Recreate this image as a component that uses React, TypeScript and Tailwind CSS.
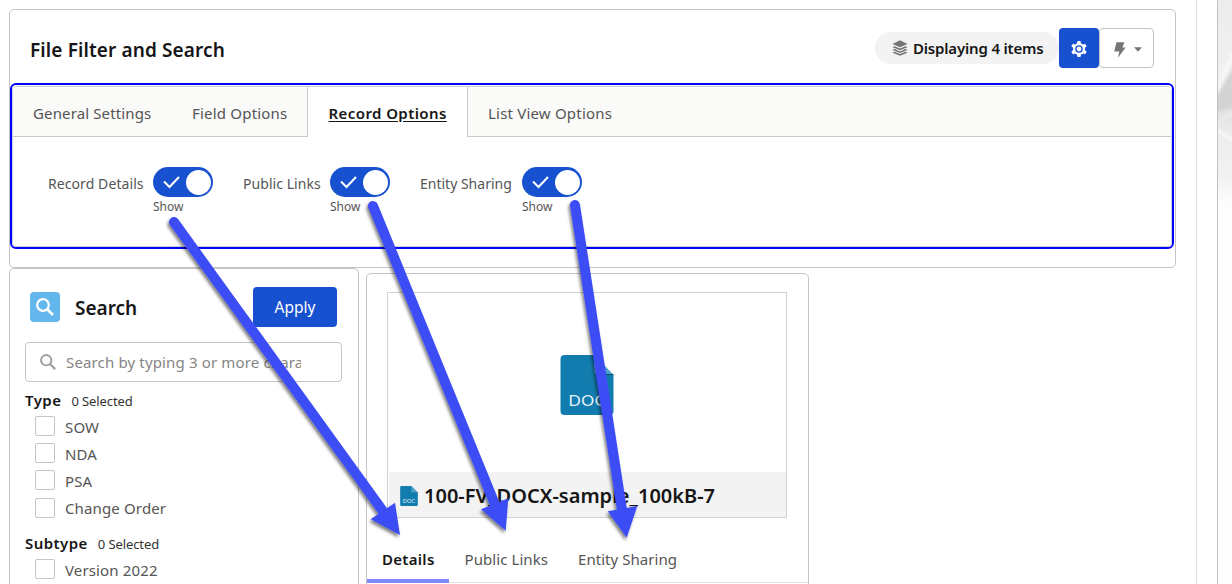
import type { ReactNode } from "react";

function SearchIcon({ className }: { className: string }) {
  return (
    <svg viewBox="0 0 18 18" className={className} fill="none" stroke="currentColor">
      <circle cx="7" cy="7" r="5.8" strokeWidth="2.2" />
      <path d="M11 11L17 17" strokeWidth="2.6" />
    </svg>
  );
}

function DocIcon({ className }: { className: string }) {
  return (
    <svg viewBox="0 0 54 60" className={className}>
      <path d="M4.5 0H34L53.5 20V56a4 4 0 0 1-4 4H4.5a4 4 0 0 1-4-4V4a4 4 0 0 1 4-4z" fill="#127cae" />
      <path d="M34 0V16a4 4 0 0 0 4 4H53.5z" fill="#4ba3cd" />
      <path d="M36 19.5H53.5" stroke="#0a4f70" strokeWidth="1" />
      <text x="8.5" y="50.5" fontFamily="Lato, sans-serif" fontSize="16" letterSpacing="0.6" fill="#e6f3f9">
        DOC
      </text>
    </svg>
  );
}

function Toggle({ label, labelClass }: { label: string; labelClass: string }) {
  return (
    <div className="flex">
      <span className={`${labelClass} mt-1.5 h-[22px] whitespace-nowrap text-[14px] leading-[22px] text-[#555]`}>{label}</span>
      <div>
        <div className="flex h-[30px] w-[60px] items-center justify-between rounded-full bg-[#1751d0] pr-0.5 pl-2.5">
          <svg viewBox="0 0 18 14" className="h-[14px] w-[18px]" fill="none" stroke="white" strokeWidth="2">
            <path d="M1 6.5L6.5 12L16 2" />
          </svg>
          <span className="h-[25px] w-[25px] rounded-full bg-white" />
        </div>
        <div className="pt-px text-[12px] leading-[18px] text-[#555]">Show</div>
      </div>
    </div>
  );
}

function Check({ children, low, last }: { children: ReactNode; low?: boolean; last?: boolean }) {
  return (
    <label className={`flex pl-[10px] ${last ? "h-[20px]" : "h-[27px]"}`}>
      <span className={`h-5 w-5 rounded-[2px] border border-[#c5c5c5] bg-white ${low ? "mt-px" : ""}`} />
      <span className="ml-[10px] h-[22px] text-[15px] leading-[23px] tracking-[0.14px] text-[#555]">{children}</span>
    </label>
  );
}

function Group({ title, children }: { title: string; children: ReactNode }) {
  return (
    <section>
      <div className="flex h-[26px] items-center gap-[10px] pb-[2px]">
        <span className="text-[15px] leading-[22px] font-semibold tracking-[0.45px] text-[#161616]">{title}</span>
        <span className="pt-px text-[13px] leading-[20px] tracking-[-0.1px] text-[#333]">0 Selected</span>
      </div>
      {children}
    </section>
  );
}

function Arrows() {
  return (
    <svg className="pointer-events-none absolute inset-0 h-[584px] w-[1232px]" viewBox="0 0 1232 584">
      <defs>
        <filter id="shadow" x="-10%" y="-10%" width="120%" height="120%">
          <feDropShadow dx="-1.5" dy="2.5" stdDeviation="1.8" floodColor="#000" floodOpacity="0.5" />
        </filter>
      </defs>
      <g filter="url(#shadow)" fill="#3d4df5" stroke="#3d4df5">
        <path d="M174 222L385 514" strokeWidth="10" strokeLinecap="round" />
        <path d="M400 535L370.7 519.3L395 502.7Z" stroke="none" />
        <path d="M373 206L496 507" strokeWidth="10" strokeLinecap="round" />
        <path d="M505.7 530.7L481 509.3L508.3 498.3Z" stroke="none" />
        <path d="M575 205L622 510" strokeWidth="10" strokeLinecap="round" />
        <path d="M626.7 537.7L607.7 511.3L637.3 506Z" stroke="none" />
      </g>
    </svg>
  );
}

export default function App() {
  return (
    <div className="relative flex h-[584px] w-[1232px] overflow-hidden bg-white font-['Noto_Sans',sans-serif]">
      <main className="h-[584px] w-[1197px] shrink-0 border-r border-[#e0e0e0] pt-[9px] pl-[9px]">
        <section className="h-[259px] w-[1167px] rounded-[5px] border border-[#c5c5c5]">
          <header className="flex h-[73px] items-center pt-[3px] pr-[21px] pl-5">
            <h1 className="pt-[5px] text-[19px] font-semibold tracking-[0.12px] text-[#161616]">File Filter and Search</h1>
            <div className="ml-auto flex items-center">
              <div className="flex h-8 w-[184px] items-center rounded-full bg-[#f3f3f3] pl-[17px]">
                <svg viewBox="0 0 16 16" className="h-4 w-4 shrink-0" fill="#757575">
                  <path d="M8 0.3L15.5 4L8 7.3L0.5 4Z" />
                  <path d="M0.5 7.2L2.6 6.2L8 8.6L13.4 6.2L15.5 7.2L8 10.3Z" />
                  <path d="M0.5 10L2.6 9L8 11.4L13.4 9L15.5 10L8 13.1Z" />
                  <path d="M0.5 12.7L2.6 11.7L8 14.1L13.4 11.7L15.5 12.7L8 15.8Z" />
                </svg>
                <span className="ml-[5px] whitespace-nowrap pt-px text-[15px] font-semibold tracking-[-0.18px] text-[#161616]">Displaying 4 items</span>
              </div>
              <button className="flex h-10 w-10 items-center justify-center rounded-[4px] bg-[#1751d0]">
                <svg viewBox="0 0 16 16" className="mt-[2px] h-4 w-4">
                  <g fill="white">
                    <circle cx="8" cy="8" r="6" />
                    <rect x="6.2" y="0" width="3.6" height="16" rx="0.9" />
                    <rect x="6.2" y="0" width="3.6" height="16" rx="0.9" transform="rotate(60 8 8)" />
                    <rect x="6.2" y="0" width="3.6" height="16" rx="0.9" transform="rotate(120 8 8)" />
                  </g>
                  <circle cx="8" cy="8" r="3.1" fill="none" stroke="#1751d0" strokeWidth="1.4" />
                </svg>
              </button>
              <button className="flex h-10 w-[55px] items-center rounded-[4px] border border-[#c5c5c5] pl-[14px]">
                <svg viewBox="0 0 12 16" className="mt-[4px] h-4 w-3" fill="#757575">
                  <path d="M2.4 0.3H10.4L8.4 5.5H11.6L4 15.8L5.3 9.6H0.3Z" />
                </svg>
                <svg viewBox="0 0 8 5" className="mt-[3px] ml-[8px] h-[5px] w-2" fill="#757575">
                  <path d="M0 0.3H8L4 4.8Z" />
                </svg>
              </button>
            </div>
          </header>

          <div className="h-[166px] w-[1164px] rounded-[6px] border-2 border-[#0000ff]">
            <div className="mt-px h-[161px] rounded-[4px] border border-[#d2d2d2]">
              <nav className="flex h-[50px] text-[15px] leading-[52px] text-[#555]">
                <div className="flex w-[295px] border-r border-b border-[#c9c9c9] bg-[#fafaf9] pl-5">
                  <span className="w-[159px] tracking-[0.13px]">General Settings</span>
                  <span className="tracking-[0.2px]">Field Options</span>
                </div>
                <div className="w-[159px] pl-[20.5px] font-semibold tracking-[0.42px] text-[#161616] underline underline-offset-2">Record Options</div>
                <div className="flex-1 border-b border-l border-[#c9c9c9] bg-[#fafaf9] pl-5 tracking-[0.2px]">List View Options</div>
              </nav>
              <div className="flex pt-[30px] pl-[35px]">
                <Toggle label="Record Details" labelClass="w-[105px] tracking-[0.08px]" />
                <div className="w-[30px]" />
                <Toggle label="Public Links" labelClass="w-[87px] tracking-[0.05px]" />
                <div className="w-[30px]" />
                <Toggle label="Entity Sharing" labelClass="w-[102px]" />
              </div>
            </div>
          </div>
        </section>

        <div className="flex gap-[7px]">
          <aside className="h-[330px] w-[350px] rounded-[5px] border border-[#c5c5c5] px-[15px]">
            <div className="mt-[18px] flex h-10 items-center pr-[6px] pl-[5px]">
              <span className="flex h-[30px] w-[30px] items-center justify-center rounded-[4px] bg-[#63b7ec] text-white">
                <SearchIcon className="h-[18px] w-[18px]" />
              </span>
              <h2 className="ml-[15px] pt-[3px] text-[19px] font-semibold text-[#161616]">Search</h2>
              <button className="ml-auto h-10 w-[84px] rounded-[4px] bg-[#1751d0] pt-px text-[15.5px] text-white">Apply</button>
            </div>
            <div className="mt-[15px] flex h-10 w-[317px] items-center rounded-[4px] border border-[#c5c5c5] pl-[14px]">
              <SearchIcon className="h-4 w-4 shrink-0 text-[#a0a0a0]" />
              <span className="ml-[10px] w-[235px] overflow-hidden whitespace-nowrap text-[15px] tracking-[0.15px] text-[#858585]">
                Search by typing 3 or more characters
              </span>
            </div>
            <div className="pt-[6px]">
              <Group title="Type">
                <div className="pt-[2px]">
                  <Check>SOW</Check>
                  <Check>NDA</Check>
                  <Check>PSA</Check>
                  <Check low>Change Order</Check>
                </div>
              </Group>
            </div>
            <div className="pt-[7px]">
              <Group title="Subtype">
                <div className="pt-[2px]">
                  <Check last>Version 2022</Check>
                </div>
              </Group>
            </div>
          </aside>

          <article className="mt-[5px] h-[330px] w-[443px] rounded-[5px] border border-[#c5c5c5]">
            <div className="mt-[18px] ml-5 flex h-[226px] w-[400px] flex-col border border-[#d2d2d2]">
              <div className="flex h-[179px] justify-center pt-[62px]">
                <DocIcon className="h-[60px] w-[54px]" />
              </div>
              <div className="ml-px flex flex-1 items-center bg-[#f3f3f3] pl-[11px]">
                <DocIcon className="mt-[3px] h-5 w-[18px]" />
                <span className="ml-[6px] pt-[2px] text-[20px] font-semibold text-[#161616]">100-FV_DOCX-sample_100kB-7</span>
              </div>
            </div>
            <nav className="mt-[21px] flex h-[44px] text-[15px] leading-[41px] text-[#555]">
              <div className="h-[44px] w-[82px] border-b-4 border-[#8088fa] pl-[15px] font-semibold tracking-[0.3px] text-[#161616]">Details</div>
              <div className="flex flex-1 border-b border-[#e0e0e0]">
                <span className="ml-[15.5px] w-[113.5px] tracking-[0.08px]">Public Links</span>
                <span className="tracking-[0.05px]">Entity Sharing</span>
              </div>
            </nav>
          </article>
        </div>
      </main>
      <div className="h-full w-[21px] shrink-0 border-r border-[#c2c2c2]" />
      <svg viewBox="0 0 14 584" className="h-[584px] w-[14px] shrink-0">
        <defs>
          <linearGradient id="marble" x1="0" y1="0" x2="0" y2="1">
            <stop offset="0" stopColor="#ececec" />
            <stop offset="0.12" stopColor="#f0f0f0" />
            <stop offset="0.19" stopColor="#e2e2e2" />
            <stop offset="0.24" stopColor="#eeeeee" />
            <stop offset="0.3" stopColor="#f1f1f1" />
            <stop offset="0.35" stopColor="#fdfdfd" />
            <stop offset="1" stopColor="#fdfdfd" />
          </linearGradient>
          <filter id="soft" x="-50%" y="-20%" width="200%" height="140%">
            <feGaussianBlur stdDeviation="1.5" />
          </filter>
        </defs>
        <rect width="14" height="584" fill="url(#marble)" />
        <g filter="url(#soft)" fill="none">
          <path d="M16 66L-2 98V112L16 107Z" fill="#d3d3d3" />
          <path d="M-2 92L16 52M-2 129L16 141" stroke="#fafafa" strokeWidth="3" />
          <path d="M-2 122L16 112" stroke="#ebebeb" strokeWidth="3" />
        </g>
      </svg>
      <Arrows />
    </div>
  );
}
